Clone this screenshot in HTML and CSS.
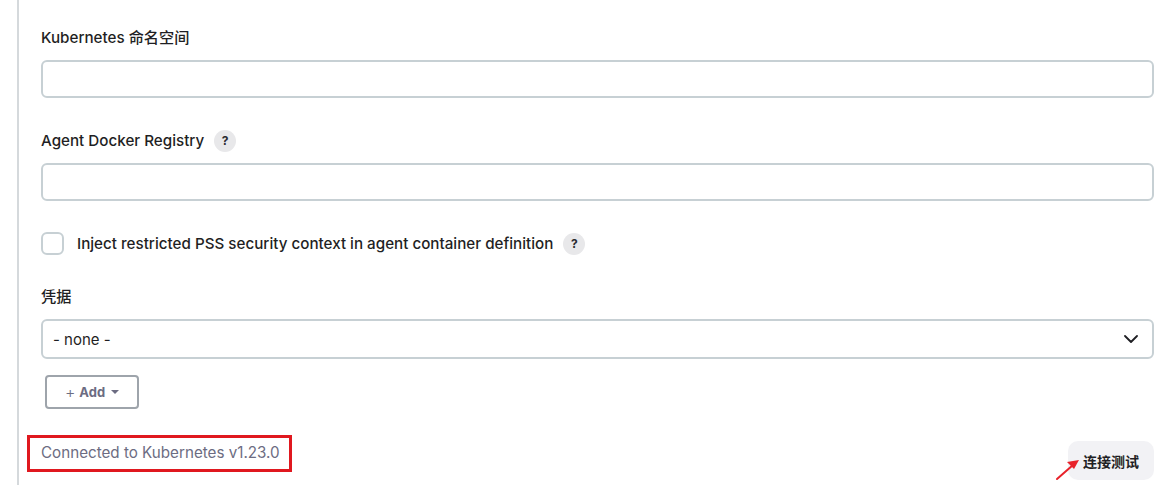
FILE: index.html
```html
<!DOCTYPE html>
<html lang="zh-CN">
<head>
    <meta charset="UTF-8">
    <meta name="viewport" content="width=device-width, initial-scale=1.0">
    <title>Kubernetes Cloud</title>
    <link rel="stylesheet" href="styles.css">
</head>
<body>
    <div class="section">
        <div class="field">
            <label class="field-label">Kubernetes 命名空间</label>
            <input type="text" class="text-input">
        </div>

        <div class="field">
            <label class="field-label">Agent Docker Registry <span class="help">?</span></label>
            <input type="text" class="text-input">
        </div>

        <div class="field check-field">
            <span class="checkbox"></span>
            <span class="check-label">Inject restricted PSS security context in agent container definition</span>
            <span class="help">?</span>
        </div>

        <div class="field">
            <label class="field-label">凭据</label>
            <div class="select">
                <span>- none -</span>
                <svg class="chevron" width="14" height="8" viewBox="0 0 14 8">
                    <path d="M1 1l6 6 6-6" fill="none" stroke="#1f1f24" stroke-width="1.8" stroke-linecap="round" stroke-linejoin="round"/>
                </svg>
            </div>
            <button class="add-button"><span class="plus">+</span> Add <span class="caret"></span></button>
        </div>

        <div class="footer-row">
            <div class="status">Connected to Kubernetes v1.23.0</div>
            <div class="test-wrap">
                <svg class="arrow" width="26" height="24" viewBox="0 0 26 24">
                    <path d="M2 22L18 8" stroke="#e8222a" stroke-width="2" stroke-linecap="round"/>
                    <path d="M24 3l-12 2 7 7z" fill="#e8222a"/>
                </svg>
                <button class="test-button">连接测试</button>
            </div>
        </div>
    </div>
</body>
</html>
```

FILE: styles.css
```css
body {
    margin: 0;
    font-family: Inter, "Noto Sans", "Noto Sans CJK SC", sans-serif;
    color: #1f1f24;
    background: #fff;
}
.section {
    margin-left: 17px;
    margin-right: 14px;
    border-left: 2px solid #d5d9dc;
    padding: 28px 0 6px 22px;
    min-height: 460px;
}
.field {
    margin-bottom: 33px;
}
.field-label {
    display: flex;
    align-items: center;
    gap: 10px;
    font-size: 15.2px;
    font-weight: 500;
    line-height: 20px;
    height: 20px;
    margin-bottom: 12px;
}
.text-input {
    display: block;
    box-sizing: border-box;
    width: 100%;
    height: 38px;
    border: 2px solid #c7d0d4;
    border-radius: 6px;
    background: #fff;
}
.help {
    display: inline-flex;
    align-items: center;
    justify-content: center;
    width: 22px;
    height: 22px;
    border-radius: 50%;
    background: #e8e8ea;
    font-size: 12px;
    font-weight: 700;
    color: #2a2a30;
}
.check-field {
    display: flex;
    align-items: center;
    margin-top: -2px;
    margin-bottom: 32px;
}
.checkbox {
    box-sizing: border-box;
    width: 23px;
    height: 23px;
    border: 2px solid #c7d0d4;
    border-radius: 6px;
    margin-right: 13px;
}
.check-label {
    font-size: 15.2px;
    font-weight: 500;
    margin-right: 10px;
}
.select {
    box-sizing: border-box;
    height: 40px;
    border: 2px solid #c7d0d4;
    border-radius: 6px;
    display: flex;
    align-items: center;
    justify-content: space-between;
    padding: 0 14px 0 10px;
    font-size: 15px;
}
.add-button {
    display: flex;
    align-items: center;
    gap: 4px;
    box-sizing: border-box;
    margin: 16px 0 0 4px;
    width: 94px;
    height: 34px;
    justify-content: center;
    border: 2px solid #9ea4ab;
    border-radius: 4px;
    background: #fff;
    color: #6c6c82;
    font-family: inherit;
    font-size: 13px;
    font-weight: 700;
}
.plus {
    font-weight: 300;
    font-size: 16px;
}
.caret {
    width: 0;
    height: 0;
    border-left: 4px solid transparent;
    border-right: 4px solid transparent;
    border-top: 4px solid #6c6c82;
    margin-left: 2px;
}
.footer-row {
    display: flex;
    justify-content: space-between;
    align-items: flex-start;
    margin-top: -7px;
}
.status {
    margin-left: -14px;
    border: 3px solid #e0181f;
    padding: 5px 9px 7px 11px;
    font-size: 15.2px;
    color: #6c6c82;
}
.test-wrap {
    position: relative;
    margin-top: 6px;
}
.test-button {
    height: 39px;
    padding: 0 15px;
    border: none;
    border-radius: 10px;
    background: #f2f2f5;
    font-family: inherit;
    font-size: 14px;
    font-weight: 700;
    color: #1f1f24;
}
.arrow {
    position: absolute;
    left: -13px;
    top: 16px;
}
```
